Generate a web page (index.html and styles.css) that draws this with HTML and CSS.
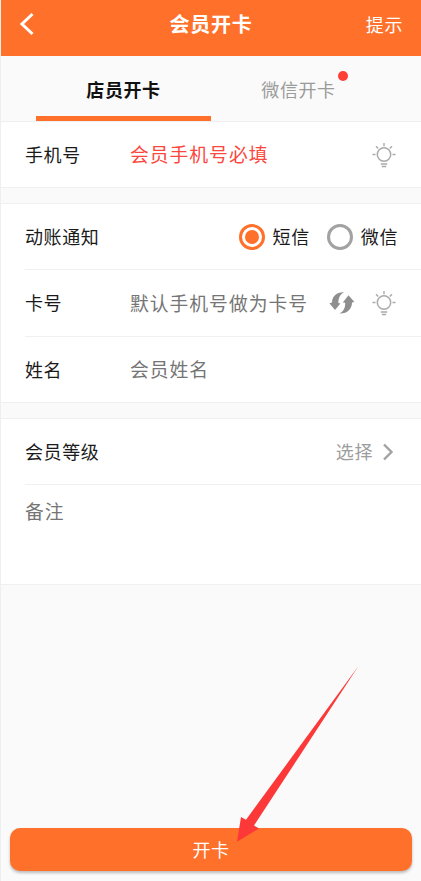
FILE: index.html
```html
<!DOCTYPE html>
<html lang="zh-CN">
<head>
<meta charset="utf-8">
<title>会员开卡</title>
<link rel="stylesheet" href="styles.css">
</head>
<body>
<svg class="defs" width="0" height="0">
  <symbol id="bulb" viewBox="0 0 24 26">
    <g fill="none" stroke="#aaa">
      <circle cx="12" cy="12.500" r="6.700" stroke-width="1.500"/>
      <path stroke-width="1.400" d="M12 1v3.200M.5 12.500h3M20.500 12.500h3M4 4.300l2.200 2.200M20 4.300l-2.200 2.200M8.800 22h6.400M9.800 24.500h4.400"/>
    </g>
  </symbol>
</svg>
<div class="app">
  <header class="header">
    <svg class="back" width="16" height="24" viewBox="0 0 16 24"><path d="M13.500 2L3 12l10.500 10" fill="none" stroke="#fff" stroke-width="3"/></svg>
    <h1 class="title">会员开卡</h1>
    <span class="tip">提示</span>
  </header>
  <nav class="tabs">
    <div class="tab active">店员开卡</div>
    <div class="tab"><span class="tab-text">微信开卡<i class="dot"></i></span></div>
  </nav>
  <section class="group first">
    <div class="row">
      <span class="label">手机号</span>
      <span class="field required">会员手机号必填</span>
      <svg class="bulb" width="24" height="26"><use href="#bulb"/></svg>
    </div>
  </section>
  <section class="group">
    <div class="row">
      <span class="label">动账通知</span>
      <div class="radios">
        <span class="radio checked"></span><span class="radio-text">短信</span>
        <span class="radio"></span><span class="radio-text">微信</span>
      </div>
    </div>
    <div class="row tall">
      <span class="label">卡号</span>
      <span class="field">默认手机号做为卡号</span>
      <svg class="swap" width="26" height="24" viewBox="0 0 26 24"><path fill="#8e8e8e" d="M15.200 1.200C7.500 .800 3 5.500 3 11.600L.4 12.200 6 19 11.400 12.600 9.400 12C9.300 7 11 3.200 15.200 1.200ZM10.400 22.600C18.200 23 23 18 23 11.600L25.400 11 19.500 4.200 13.800 11.400 16.200 11.700C16.400 16.500 14.600 20.500 10.400 22.600Z"/></svg>
      <svg class="bulb" width="24" height="26"><use href="#bulb"/></svg>
    </div>
    <div class="row">
      <span class="label">姓名</span>
      <span class="field">会员姓名</span>
    </div>
  </section>
  <section class="group">
    <div class="row">
      <span class="label">会员等级</span>
      <span class="choose">选择</span>
      <svg class="next" width="12" height="18" viewBox="0 0 12 18"><path d="M2 1.500L9.500 9 2 16.500" fill="none" stroke="#a2a2a2" stroke-width="2.400"/></svg>
    </div>
    <div class="row remark"><span class="field">备注</span></div>
  </section>
  <footer class="footer">
    <button class="submit">开卡</button>
    <svg class="arrow" width="124" height="180" viewBox="0 0 124 180"><path fill="#fd3838" d="M122.500 2L18 161.500 23 164.500 1 177.700 5 153 10 155.700Z"/></svg>
  </footer>
</div>
</body>
</html>
```
FILE: styles.css
```css
* { box-sizing: border-box; }
body {
  margin: 0;
  font-family: "Noto Sans CJK SC", sans-serif;
  font-size: 18px;
  letter-spacing: .6px;
  color: #1a1a1a;
  background: #fafafa;
}
.defs { display: block; height: 0; }
.app {
  display: flex;
  flex-direction: column;
  height: 881px;
  border-left: 1px solid #efefef;
  overflow: hidden;
}
.header {
  display: grid;
  grid-template-columns: 1fr auto 1fr;
  align-items: center;
  height: 56px;
  padding: 0 18px 8px;
  color: #fff;
  background: #ff702a;
}
.title {
  margin: 0;
  font-size: 20px;
  font-weight: 700;
  letter-spacing: .8px;
  line-height: 28px;
}
.tip {
  justify-self: end;
  padding-bottom: 1px;
}
.tabs {
  display: flex;
  height: 66px;
  padding: 0 35px;
  border-bottom: 1px solid #efefef;
}
.tab {
  flex: 1;
  height: 65px;
  line-height: 66px;
  text-align: center;
  color: #9b9b9b;
}
.tab.active {
  font-weight: 700;
  color: #111;
  border-bottom: 5px solid #ff702a;
}
.tab-text { position: relative; }
.dot {
  position: absolute;
  top: -5px;
  right: -12px;
  width: 10px;
  height: 10px;
  border-radius: 50%;
  background: #fd3f36;
}
.group {
  margin-bottom: 15px;
  padding-left: 24px;
  background: #fff;
  border-top: 1px solid #f0f0f0;
  border-bottom: 1px solid #f0f0f0;
}
.group.first { border-top: 0; }
.row {
  display: flex;
  align-items: center;
  height: 65px;
  padding-right: 25px;
}
.row + .row {
  height: 66px;
  border-top: 1px solid #f0f0f0;
}
.row + .tall { height: 67px; }
.label {
  width: 105px;
  padding-bottom: 2px;
}
.field {
  padding-bottom: 2px;
  font-size: 18.800px;
  letter-spacing: 1px;
  color: #757575;
}
.field.required { color: #fb473d; }
.bulb { margin-left: auto; }
.swap { margin-left: 21px; }
.radios {
  display: flex;
  align-items: center;
  margin: 0 -2px 0 auto;
}
.radio {
  display: flex;
  align-items: center;
  justify-content: center;
  width: 26px;
  height: 26px;
  border: 3px solid #a2a2a2;
  border-radius: 50%;
}
.radio.checked { border-color: #ff702a; }
.radio.checked::before {
  content: "";
  width: 14px;
  height: 14px;
  border-radius: 50%;
  background: #ff702a;
}
.radio-text {
  margin-left: 8px;
  padding-bottom: 2px;
}
.radio-text + .radio { margin-left: 17px; }
.choose {
  margin-left: auto;
  padding-bottom: 2px;
  color: #9d9d9d;
}
.next { margin: 0 2px 0 9px; }
.row + .remark {
  align-items: flex-start;
  height: 100px;
  padding-top: 12px;
}
.footer {
  position: relative;
  margin-top: auto;
  padding: 0 9px 10px;
}
.submit {
  display: block;
  width: 100%;
  height: 43px;
  padding: 0 0 2px;
  border: 0;
  border-radius: 10px;
  font: inherit;
  letter-spacing: .6px;
  color: #fff;
  background: #ff702a;
  box-shadow: 0 2px 3px rgba(0, 0, 0, .25);
}
.arrow {
  position: absolute;
  left: 235px;
  top: -164px;
}
```
